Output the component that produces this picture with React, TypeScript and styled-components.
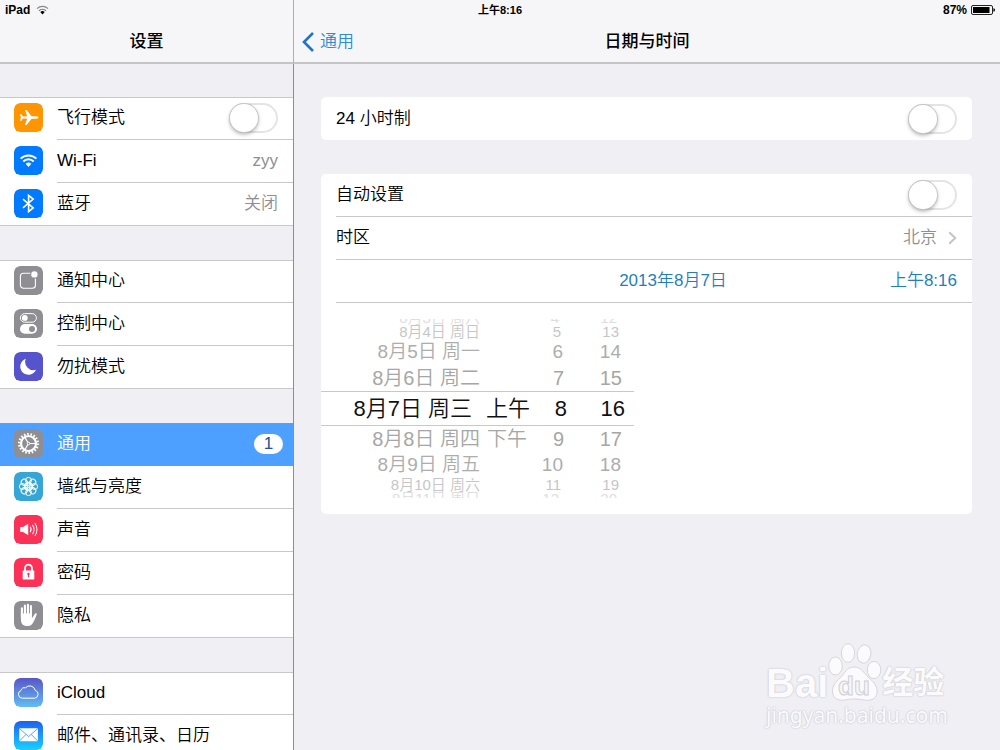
import React from "react";
import styled, { createGlobalStyle, css } from "styled-components";

const GlobalStyle = createGlobalStyle`
  *, *::before, *::after { box-sizing: border-box; }
  body {
    margin: 0;
    background: #efeff4;
    color: #000;
    font: 350 17px/24px "Liberation Sans", "Noto Sans CJK SC", sans-serif;
  }
  a { color: inherit; text-decoration: none; }
  ul { list-style: none; margin: 0; padding: 0; }
`;

const line = "#c8c7cc";

const Screen = styled.div`
  position: relative;
  display: flex;
  height: 100vh;
  overflow: hidden;
`;

const StatusBar = styled.div`
  position: absolute;
  inset: 0 0 auto 0;
  z-index: 1;
  display: grid;
  grid-template-columns: 1fr auto 1fr;
  align-items: center;
  height: 20px;
  padding: 0 5px;
  font-size: 12px;
  line-height: 20px;
  font-weight: 700;
`;

const StatusSide = styled.div<{ $end?: boolean }>`
  display: flex;
  align-items: center;
  gap: ${(p) => (p.$end ? 4 : 6)}px;
  justify-content: ${(p) => (p.$end ? "flex-end" : "flex-start")};
`;

const Clock = styled.time`
  font-size: 11px;
  font-weight: 700;
`;

const Sidebar = styled.nav`
  display: flex;
  flex: 0 0 294px;
  flex-direction: column;
`;

const SidebarBody = styled.div`
  display: flex;
  flex: 1;
  flex-direction: column;
  gap: 34px;
  min-height: 0;
  padding-top: 33px;
  overflow-y: auto;
  scrollbar-width: none;
  border-right: 1px solid #8c8c91;
`;

const TitleBar = styled.header<{ $divided?: boolean }>`
  display: grid;
  flex: none;
  grid-template-columns: 1fr auto 1fr;
  align-items: center;
  height: 64px;
  padding: 22px 8px 0;
  background: #f6f6f8;
  border-bottom: 2px solid #c4c4c8;
  ${(p) => p.$divided && css`border-right: 1px solid #b0b0b4;`}
`;

const Title = styled.h1`
  grid-column: 2;
  margin: 0;
  font-size: 17px;
  line-height: 24px;
  font-weight: 500;
`;

const Back = styled.a`
  display: flex;
  align-items: center;
  gap: 6px;
  color: #2f8ad0;
`;

const Group = styled.ul`
  flex: none;
  background: #fff;
`;

const Item = styled.li<{ $selected?: boolean }>`
  height: 43px;
  padding-left: 14px;
  ${(p) =>
    p.$selected &&
    css`
      background: #4da0ff;
      color: #fff;
    `}
  &:first-child { box-shadow: inset 0 1px ${(p) => (p.$selected ? "#6f9bd0" : line)}; }
  &:last-child { border-bottom: 1px solid ${line}; }
`;

const itemRow = css`
  display: flex;
  align-items: center;
  gap: 14px;
  height: 100%;
`;
const ItemLink = styled.a`${itemRow}`;
const ItemLabel = styled.label`${itemRow}`;

const ItemText = styled.span<{ $last?: boolean; $selected?: boolean; $badge?: boolean }>`
  display: flex;
  flex: 1;
  align-items: center;
  justify-content: space-between;
  height: 100%;
  padding-right: ${(p) => (p.$badge ? 10 : 15)}px;
  border-bottom: ${(p) => (p.$last ? "0" : `1px solid ${p.$selected ? "transparent" : line}`)};
`;

const Value = styled.span`
  color: #8e8e93;
`;

const Badge = styled.span`
  width: 29px;
  border-radius: 10px;
  background: #fff;
  color: #23509f;
  font-size: 17px;
  line-height: 20px;
  font-weight: 400;
  text-align: center;
`;

const Toggle = styled.input`
  flex: none;
  width: 49px;
  height: 30px;
  margin: 0;
  appearance: none;
  border: 2px solid #e4e4e4;
  border-radius: 15px;
  background: #fff;
  &::before {
    content: "";
    display: block;
    width: 28px;
    height: 28px;
    margin: -1px;
    border-radius: 50%;
    background: #fff;
    box-shadow: 0 0 0 1px #c6c6c6, 0 2px 4px rgba(0, 0, 0, 0.35);
  }
  &:checked { background: #4cd964; border-color: #4cd964; }
  &:checked::before { margin-left: 18px; }
`;

const Detail = styled.main`
  display: flex;
  flex: 1;
  flex-direction: column;
  min-width: 0;
`;

const DetailBody = styled.div`
  display: flex;
  flex-direction: column;
  gap: 34px;
  padding: 33px 28px 0 27px;
`;

const Card = styled.section`
  border-radius: 5px;
  background: #fff;
`;

const cardRow = css`
  display: flex;
  align-items: center;
  justify-content: space-between;
  height: 43px;
  margin-left: 15px;
  padding-right: 15px;
  &:not(:last-child) { border-bottom: 1px solid ${line}; }
`;
const CardLabel = styled.label`${cardRow}`;
const CardLink = styled.a`${cardRow}`;
const DateRow = styled.div`
  ${cardRow}
  display: grid;
  grid-template-columns: 1fr auto 1fr;
  color: #1f7fbd;
  & > :first-child { grid-column: 2; padding-left: 53px; }
  & > :last-child { text-align: right; }
`;

const ZoneValue = styled(Value)`
  display: flex;
  align-items: center;
  gap: 11px;
`;

const Wheel = styled.ul`
  width: 313px;
  padding: 16px 0;
`;

const wheelLevels = [
  { height: 35, line: 33, size: 22, inset: 0, color: "#111" },
  { height: 26, line: 26, size: 20, inset: 3, color: "#a6a6a6" },
  { height: 26, line: 26, size: 19, inset: 4, color: "#adadad" },
  { height: 14, line: 14, size: 15, inset: 6, color: "#c6c6c6" },
  { height: 6, line: 14, size: 15, inset: 8, color: "#dedede" },
];

const WheelRow = styled.li<{ $level: number; $above: boolean }>`
  display: grid;
  grid-template-columns: 159px 50px 37px 58px;
  align-content: ${(p) => (p.$above ? "end" : "start")};
  height: ${(p) => wheelLevels[p.$level].height}px;
  overflow: hidden;
  color: ${(p) => wheelLevels[p.$level].color};
  font-size: ${(p) => wheelLevels[p.$level].size}px;
  line-height: ${(p) => wheelLevels[p.$level].line}px;
  text-align: right;
  white-space: nowrap;
  & > :not(:first-child) { padding-right: ${(p) => wheelLevels[p.$level].inset}px; }
  ${(p) =>
    p.$level === 0 &&
    css`
      border: solid ${line};
      border-width: 1px 0;
      & > :first-child { padding-right: 8px; }
    `}
`;

const Watermark = styled.div`
  position: absolute;
  right: 54px;
  bottom: 20px;
  width: 180px;
  color: #fbfbfd;
  text-shadow: 0 0 1px #c4c4cc, 0 0 2px #c4c4cc;
`;

const WatermarkLogo = styled.div`
  display: flex;
  align-items: flex-end;
  height: 60px;
  font-size: 40px;
  line-height: 36px;
  font-weight: 700;
`;

const WatermarkName = styled.span`
  font-size: 31px;
  line-height: 36px;
`;

const WatermarkUrl = styled.div`
  font: 400 21px/29px "Noto Sans", sans-serif;
`;

const PawText = styled.text`
  fill: #f6f6f9;
  stroke: #cfcfd5;
  stroke-width: 1px;
  font-size: 26px;
  font-weight: 700;
  text-anchor: middle;
  text-shadow: none;
`;

const Icon = styled.svg`
  display: block;
  flex: none;
  width: 29px;
  height: 29px;
  margin-bottom: 2px;
  border-radius: 6px;
`;

const icons: Record<string, { bg: string; art: React.ReactNode }> = {
  plane: {
    bg: "#ff9500",
    art: (
      <path
        fill="#fff"
        d="M24.6 14.5C24.6 13.6 22.6 13.2 21 13.2H17.6L12.6 6.9H11L13.2 13.2L9 13.5L7.3 11.3H6L6.9 14.5L6 17.7H7.3L9 15.5L13.2 15.8L11 22.1H12.6L17.6 15.8H21C22.6 15.8 24.6 15.4 24.6 14.5Z"
      />
    ),
  },
  wifi: {
    bg: "#007aff",
    art: (
      <g fill="none" stroke="#fff" strokeWidth="1.9">
        <path d="M6.6 12.7A11.2 11.2 0 0 1 22.4 12.7M9.3 15.5A7.2 7.2 0 0 1 19.7 15.5" />
        <path fill="#fff" stroke="none" d="M11.6 17.8A4.2 4.2 0 0 1 17.4 17.8L14.5 20.9Z" />
      </g>
    ),
  },
  bluetooth: {
    bg: "#007aff",
    art: <path fill="none" stroke="#fff" strokeWidth="1.6" d="M9 10.2L19.2 18.9L14.6 22.6V6.4L19.2 10.1L9 18.8" />,
  },
  notice: {
    bg: "#8e8e93",
    art: (
      <>
        <rect x="6.4" y="7.2" width="15" height="15" rx="3" fill="none" stroke="#fff" strokeWidth="1.1" />
        <circle cx="20.4" cy="8.4" r="3.8" fill="#fff" stroke="#8e8e93" strokeWidth="1.2" />
      </>
    ),
  },
  control: {
    bg: "#8e8e93",
    art: (
      <>
        <rect x="6.4" y="4.6" width="16" height="8.6" rx="4.3" fill="none" stroke="#fff" />
        <circle cx="10.8" cy="8.9" r="2.9" fill="#fff" />
        <rect x="6" y="15" width="17" height="9.8" rx="4.9" fill="#fff" />
        <circle cx="18" cy="19.9" r="3" fill="#8e8e93" />
      </>
    ),
  },
  moon: {
    bg: "#5654cc",
    art: <path fill="#fff" d="M11.8 6.8A8.2 8.2 0 1 0 22 17.8A8.3 8.3 0 0 1 11.8 6.8Z" />,
  },
  gear: {
    bg: "#8e8e93",
    art: (
      <g fill="none" stroke="#fff">
        <circle cx="14.5" cy="14.5" r="7.5" strokeWidth="2.2" />
        <circle cx="14.5" cy="14.5" r="9.4" strokeWidth="2.2" strokeDasharray="1.6 1.682" />
        <path strokeWidth="1.2" d="M14.5 14.5H21.5M14.5 14.5L10.8 8.2M14.5 14.5L10.8 20.8" />
        <circle cx="14.5" cy="14.5" r="1.3" fill="#8e8e93" strokeWidth="1" />
      </g>
    ),
  },
  flower: {
    bg: "#35a6d6",
    art: (
      <g fill="none" stroke="#fff" strokeWidth="1">
        {[0, 45, 90, 135, 180, 225, 270, 315].map((a) => (
          <circle key={a} cx="14.5" cy="8.4" r="3" transform={`rotate(${a} 14.5 14.5)`} />
        ))}
        {[0, 45, 90, 135, 180, 225, 270, 315].map((a) => (
          <circle key={a} cx="14.5" cy="11.8" r="1.9" transform={`rotate(${a + 22} 14.5 14.5)`} strokeWidth="0.7" />
        ))}
      </g>
    ),
  },
  sound: {
    bg: "#fc3158",
    art: (
      <>
        <path fill="#fff" d="M6.2 12H9L14.2 8.7V20.3L9 17H6.2Z" />
        <path
          fill="none"
          stroke="#fff"
          strokeWidth="1.1"
          d="M16.2 11.8A5 5 0 0 1 16.2 17.2M18.5 9.9A8 8 0 0 1 18.5 19.1M20.8 8A11 11 0 0 1 20.8 21"
        />
      </>
    ),
  },
  lock: {
    bg: "#fc3158",
    art: (
      <>
        <path fill="none" stroke="#fff" strokeWidth="1.8" d="M11 13V10.2A3.5 3.5 0 0 1 18 10.2V13" />
        <rect x="8.7" y="12.4" width="11.6" height="9" rx="0.6" fill="#fff" />
        <path fill="#fc3158" d="M14.5 14.8A1.3 1.3 0 0 1 15.1 17.2V19.2H13.9V17.2A1.3 1.3 0 0 1 14.5 14.8Z" />
      </>
    ),
  },
  hand: {
    bg: "#8e8e93",
    art: (
      <>
        <path
          fill="none"
          stroke="#fff"
          strokeWidth="2.1"
          strokeLinecap="round"
          d="M7.9 7.2V16M10.9 4.6V15M13.9 3.7V15M16.9 5V15"
        />
        <path
          fill="#fff"
          d="M6.9 12.5H17.9V17.2C19 16.2 20 14 21 12.8C21.8 12 23 12.4 22.8 13.3C21.6 16.6 20.2 20 18.6 22.4C17.2 24.4 15.6 25 13.2 25C8.8 25 6.9 22.4 6.9 18Z"
        />
      </>
    ),
  },
  cloud: {
    bg: "url(#cloudFill)",
    art: (
      <path
        fill="none"
        stroke="#fff"
        strokeWidth="1"
        d="M8.2 20.2A4 4 0 0 1 7.2 12.4A3 3 0 0 1 11.4 9.9A5.6 5.6 0 0 1 21.2 12.4A4 4 0 0 1 20.8 20.2Z"
      />
    ),
  },
  mail: {
    bg: "url(#mailFill)",
    art: (
      <>
        <rect x="5.3" y="7.2" width="18.6" height="13" rx="0.8" fill="#fff" />
        <path fill="none" stroke="#4a9be8" strokeWidth="0.9" d="M5.6 7.6L14.6 15.6L23.6 7.6M5.6 19.9L12 13.4M23.6 19.9L17.2 13.4" />
      </>
    ),
  },
};

function AppIcon({ name }: { name: string }) {
  const { bg, art } = icons[name];
  return (
    <Icon viewBox="0 0 29 29" aria-hidden="true">
      <defs>
        <linearGradient id="cloudFill" x2="0" y2="1">
          <stop stopColor="#5856c8" />
          <stop offset="1" stopColor="#62bdf3" />
        </linearGradient>
        <linearGradient id="mailFill" x2="0" y2="1">
          <stop stopColor="#1d62f0" />
          <stop offset="1" stopColor="#1ad0fd" />
        </linearGradient>
      </defs>
      <rect width="29" height="29" rx="6" fill={bg} />
      {art}
    </Icon>
  );
}

type Entry = { icon: string; text: string; value?: string; toggle?: boolean; badge?: string; selected?: boolean };

const groups: Entry[][] = [
  [
    { icon: "plane", text: "飞行模式", toggle: true },
    { icon: "wifi", text: "Wi-Fi", value: "zyy" },
    { icon: "bluetooth", text: "蓝牙", value: "关闭" },
  ],
  [
    { icon: "notice", text: "通知中心" },
    { icon: "control", text: "控制中心" },
    { icon: "moon", text: "勿扰模式" },
  ],
  [
    { icon: "gear", text: "通用", badge: "1", selected: true },
    { icon: "flower", text: "墙纸与亮度" },
    { icon: "sound", text: "声音" },
    { icon: "lock", text: "密码" },
    { icon: "hand", text: "隐私" },
  ],
  [
    { icon: "cloud", text: "iCloud" },
    { icon: "mail", text: "邮件、通讯录、日历" },
  ],
];

const wheel = [
  ["8月3日 周六", "", "4", "12"],
  ["8月4日 周日", "", "5", "13"],
  ["8月5日 周一", "", "6", "14"],
  ["8月6日 周二", "", "7", "15"],
  ["8月7日 周三", "上午", "8", "16"],
  ["8月8日 周四", "下午", "9", "17"],
  ["8月9日 周五", "", "10", "18"],
  ["8月10日 周六", "", "11", "19"],
  ["8月11日 周日", "", "12", "20"],
];

function SidebarItem({ entry, last }: { entry: Entry; last: boolean }) {
  const content = (
    <>
      <AppIcon name={entry.icon} />
      <ItemText $last={last} $selected={entry.selected} $badge={!!entry.badge}>
        {entry.text}
        {entry.value && <Value>{entry.value}</Value>}
        {entry.badge && <Badge>{entry.badge}</Badge>}
        {entry.toggle && <Toggle type="checkbox" role="switch" />}
      </ItemText>
    </>
  );
  return (
    <Item $selected={entry.selected}>
      {entry.toggle ? <ItemLabel>{content}</ItemLabel> : <ItemLink href="#">{content}</ItemLink>}
    </Item>
  );
}

export default function App() {
  return (
    <Screen>
      <GlobalStyle />
      <StatusBar>
        <StatusSide>
          iPad
          <svg width="13" height="10" viewBox="0 0 13 10" fill="none" aria-hidden="true">
            <path stroke="#888" strokeWidth="1.2" d="M1 3.6A8 8 0 0 1 12 3.6" />
            <path stroke="#777" strokeWidth="1.2" d="M3 5.7A5.2 5.2 0 0 1 10 5.7" />
            <path fill="#000" d="M4.3 7A3.2 3.2 0 0 1 8.7 7L6.5 9.4Z" />
          </svg>
        </StatusSide>
        <Clock>上午8:16</Clock>
        <StatusSide $end>
          87%
          <svg width="24" height="10" viewBox="0 0 24 10" aria-hidden="true">
            <rect x="0.5" y="0.5" width="21" height="9" rx="1.5" fill="none" stroke="#222" />
            <rect x="2" y="2" width="16.5" height="6" />
            <path d="M22.4 3.2Q24 3.4 24 5T22.4 6.8Z" />
          </svg>
        </StatusSide>
      </StatusBar>

      <Sidebar>
        <TitleBar $divided>
          <Title>设置</Title>
        </TitleBar>
        <SidebarBody>
          {groups.map((group, i) => (
            <Group key={i}>
              {group.map((entry, j) => (
                <SidebarItem key={entry.icon} entry={entry} last={j === group.length - 1} />
              ))}
            </Group>
          ))}
        </SidebarBody>
      </Sidebar>

      <Detail>
        <TitleBar>
          <Back href="#">
            <svg width="12" height="20" viewBox="0 0 12 20" fill="none" aria-hidden="true">
              <path stroke="#1f74c9" strokeWidth="2.6" d="M11 1L2 10L11 19" />
            </svg>
            通用
          </Back>
          <Title as="h2">日期与时间</Title>
        </TitleBar>
        <DetailBody>
          <Card>
            <CardLabel>
              24 小时制
              <Toggle type="checkbox" role="switch" />
            </CardLabel>
          </Card>
          <Card>
            <CardLabel>
              自动设置
              <Toggle type="checkbox" role="switch" />
            </CardLabel>
            <CardLink href="#">
              时区
              <ZoneValue>
                北京
                <svg width="9" height="14" viewBox="0 0 9 14" fill="none" aria-hidden="true">
                  <path stroke="#c3c3c8" strokeWidth="2" d="M1.2 1.2L7.2 7L1.2 12.8" />
                </svg>
              </ZoneValue>
            </CardLink>
            <DateRow>
              <span>2013年8月7日</span>
              <span>上午8:16</span>
            </DateRow>
            <Wheel>
              {wheel.map((cells, i) => (
                <WheelRow key={cells[0]} $level={Math.abs(i - 4)} $above={i < 4}>
                  {cells.map((cell, j) => (
                    <span key={j}>{cell}</span>
                  ))}
                </WheelRow>
              ))}
            </Wheel>
          </Card>
        </DetailBody>
      </Detail>

      <Watermark>
        <WatermarkLogo>
          Bai
          <svg width="54" height="60" viewBox="0 0 54 60" aria-hidden="true">
            <g fill="#fbfbfd" stroke="#d6d6dc" strokeWidth="1">
              <ellipse cx="7.5" cy="25" rx="6.8" ry="9" />
              <ellipse cx="20" cy="12" rx="6.6" ry="9.4" />
              <ellipse cx="36" cy="13" rx="6.8" ry="9.2" transform="rotate(10 36 13)" />
              <ellipse cx="46" cy="29" rx="6.8" ry="8.6" />
              <path d="M26 26C33 26 36 32 40 36C46 41 50 46 49 52C48 59 41 60 36 59C30 57.6 22 57.6 17 59C11 60 5 58 4.5 51C4 45 8 41 12 37C17 32 19 26 26 26Z" />
            </g>
            <PawText x="26" y="54">
              du
            </PawText>
          </svg>
          <WatermarkName>经验</WatermarkName>
        </WatermarkLogo>
        <WatermarkUrl>jingyan.baidu.com</WatermarkUrl>
      </Watermark>
    </Screen>
  );
}
